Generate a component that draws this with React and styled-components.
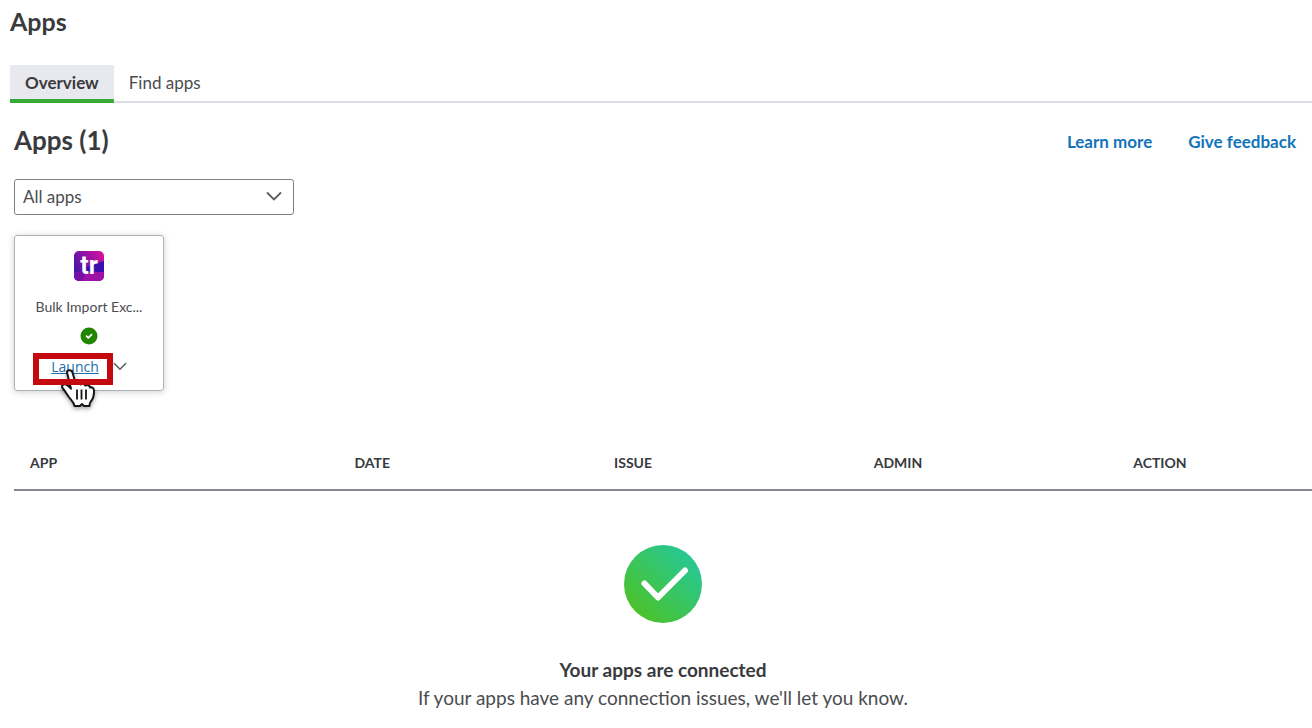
import React, { useState } from "react";
import styled, { createGlobalStyle, css } from "styled-components";

const GlobalStyle = createGlobalStyle`
  *, *::before, *::after {
    box-sizing: border-box;
  }

  body {
    margin: 0;
    background: #fff;
    color: #393a3d;
    font-family: Lato, "Open Sans", sans-serif;
    font-size: 17px;
    line-height: 20px;
  }
`;

const Page = styled.main`
  padding: 5px 0 0 10px;
`;

const PageTitle = styled.h1`
  margin: 0;
  font-size: 25px;
  font-weight: 700;
  line-height: 32px;
`;

const TabBar = styled.div`
  display: flex;
  align-items: flex-end;
  margin-top: 28px;
  height: 38px;
  box-shadow: inset 0 -2px 0 #dcdce4;
`;

const Tab = styled.button`
  height: 38px;
  padding: 0 15px 3px;
  border: 0;
  background: transparent;
  color: #4b4c50;
  font: inherit;
  cursor: pointer;

  ${props =>
    props.$active &&
    css`
      background: linear-gradient(#39a935, #39a935) bottom / 100% 4px no-repeat,
        #e8e9ee;
      color: #393a3d;
      font-weight: 700;
    `}
`;

const Content = styled.section`
  padding-left: 4px;
`;

const SectionHeader = styled.header`
  display: flex;
  align-items: center;
  justify-content: space-between;
  margin-top: 21px;
  padding-right: 16px;
`;

const SectionTitle = styled.h2`
  margin: 0;
  font-size: 26px;
  font-weight: 700;
  line-height: 32px;
`;

const HeaderLinks = styled.nav`
  display: flex;
  gap: 36px;
  padding-top: 4px;
`;

const HeaderLink = styled.a`
  color: #1274b8;
  font-weight: 700;
  text-decoration: none;
`;

const SelectField = styled.div`
  display: grid;
  align-items: center;
  width: 280px;
  margin-top: 23px;

  > * {
    grid-area: 1 / 1;
  }

  > svg {
    justify-self: end;
    margin-right: 12px;
    pointer-events: none;
  }
`;

const Select = styled.select`
  appearance: none;
  width: 100%;
  height: 36px;
  padding: 0 40px 0 8px;
  border: 1px solid #7d7f86;
  border-radius: 3px;
  background: #fff;
  color: #4b4c50;
  font: inherit;
`;

const AppCard = styled.article`
  display: flex;
  flex-direction: column;
  align-items: center;
  width: 150px;
  height: 156px;
  margin-top: 20px;
  padding-top: 15px;
  border: 1px solid #b0b1ba;
  border-radius: 3px;
  box-shadow: 0 1px 6px rgba(0, 0, 0, 0.2);
`;

const AppName = styled.div`
  margin: 16px 0 10px;
  color: #4b4c50;
  font-size: 14px;
  white-space: nowrap;
`;

const AppActions = styled.div`
  display: flex;
  align-items: center;
  gap: 14px;
  margin-top: 12px;
`;

const LaunchArea = styled.div`
  position: relative;
`;

const LaunchLink = styled.a`
  display: block;
  color: #1a6ea8;
  font-family: "Open Sans", sans-serif;
  font-size: 14px;
`;

const Highlight = styled.div`
  position: absolute;
  inset: -4px -14px -8px -18px;
  border: 6px solid #c40a0e;
  pointer-events: none;
`;

const Pointer = styled.div`
  position: absolute;
  top: 12px;
  left: 10px;
  pointer-events: none;
  filter: drop-shadow(0 2px 2px rgba(0, 0, 0, 0.35));

  > svg {
    display: block;
  }
`;

const MenuButton = styled.button`
  display: flex;
  padding: 0;
  border: 0;
  background: none;
`;

const IssuesTable = styled.table`
  width: 100%;
  margin-top: 45px;
  border-collapse: collapse;
  border-bottom: 2px solid #85878e;
  table-layout: fixed;
`;

const HeaderCell = styled.th`
  width: ${props => props.$width};
  height: 54px;
  padding: 0 16px;
  font-size: 14px;
  font-weight: 700;
  text-align: left;
`;

const EmptyState = styled.div`
  display: flex;
  flex-direction: column;
  align-items: center;
  margin-top: 53px;
  text-align: center;
`;

const EmptyTitle = styled.h3`
  margin: 32px 0 0;
  font-size: 19px;
  font-weight: 700;
  line-height: 28px;
`;

const EmptyText = styled.p`
  margin: 0;
  color: #4b4c50;
  font-size: 19px;
  line-height: 28px;
`;

const Chevron = ({ size = 16 }) => (
  <svg width={size} height={size} viewBox="0 0 16 16" fill="none" aria-hidden="true">
    <path d="M1.500 4 8 10.500 14.500 4" stroke="#5d5e63" strokeWidth="1.800" strokeLinecap="round" />
  </svg>
);

const AppLogo = () => (
  <svg width="30" height="30" viewBox="0 0 30 30" aria-hidden="true">
    <defs>
      <linearGradient id="logoTop" x1="0" y1="0.600" x2="1" y2="0">
        <stop offset="0" stopColor="#4a14a4" />
        <stop offset="0.500" stopColor="#9413a4" />
        <stop offset="1" stopColor="#e0109c" />
      </linearGradient>
      <clipPath id="logoShape">
        <rect width="30" height="30" rx="5" />
      </clipPath>
    </defs>
    <g clipPath="url(#logoShape)">
      <rect width="30" height="30" fill="url(#logoTop)" />
      <path d="M30 10 12 16v6h18z" fill="#3a0fae" />
      <path d="M0 21h30v9H0z" fill="#9c12a6" />
      <path d="M0 21h12l-4 9H0z" fill="#7412a8" />
    </g>
    <text x="15" y="23" textAnchor="middle" fill="#fff" fontFamily="Roboto, sans-serif" fontSize="25" fontWeight="700">
      tr
    </text>
  </svg>
);

const StatusIcon = () => (
  <svg width="18" height="18" viewBox="0 0 18 18" role="img" aria-label="Connected">
    <circle cx="9" cy="9" r="8.500" fill="#228500" />
    <path d="m6.500 9.200 1.800 1.700 3.200-3.200" fill="none" stroke="#fff" strokeWidth="1.800" strokeLinecap="round" strokeLinejoin="round" />
  </svg>
);

const HandIcon = () => (
  <svg width="38" height="40" viewBox="0 0 38 40" aria-hidden="true">
    <path
      d="M6 3.500C6 .500 10.500.300 11.500 3.500l3.200 11c1.500-1.500 4-1 4.800 1 1.500-1.300 4-.800 4.800 1 2-1 4.200-.300 4.700 2 2-.500 3.800.500 4 3 .200 5-.800 8.500-3.500 11.500-.800 1-1 2-1 4h-5.500l-2-2-2 2h-5.500c-.500-4-3.500-6-6-9.500-2-3-3.500-5.500-6-8.500-1.500-2.500 1-4.500 3.500-3.500 2 .800 3.500 2.500 5 4.200z"
      fill="#fff"
      stroke="#161616"
      strokeWidth="2"
      strokeLinejoin="round"
    />
    <path d="M16 20.500v10M20.500 20.500v10M25 20.500v10" stroke="#161616" strokeWidth="1.800" />
  </svg>
);

const ConnectedIcon = () => (
  <svg width="80" height="80" viewBox="0 0 80 80" aria-hidden="true">
    <defs>
      <linearGradient id="connected" x1="0.150" y1="0.850" x2="0.850" y2="0.150">
        <stop offset="0" stopColor="#4bc22c" />
        <stop offset="1" stopColor="#27c893" />
      </linearGradient>
    </defs>
    <circle cx="40" cy="40" r="39" fill="url(#connected)" />
    <path d="M21.500 39.500 35 53.500 62 26.500" fill="none" stroke="#fff" strokeWidth="6" strokeLinecap="round" strokeLinejoin="round" />
  </svg>
);

const columns = [
  { label: "APP", width: "25%" },
  { label: "DATE", width: "20%" },
  { label: "ISSUE", width: "20%" },
  { label: "ADMIN", width: "20%" },
  { label: "ACTION", width: "15%" }
];

const tabs = ["Overview", "Find apps"];

const App = () => {
  const [activeTab, setActiveTab] = useState("Overview");

  return (
    <>
      <GlobalStyle />
      <Page>
        <PageTitle>Apps</PageTitle>
        <TabBar role="tablist">
          {tabs.map(tab => (
            <Tab
              key={tab}
              role="tab"
              aria-selected={tab === activeTab}
              $active={tab === activeTab}
              onClick={() => setActiveTab(tab)}
            >
              {tab}
            </Tab>
          ))}
        </TabBar>

        <Content>
          <SectionHeader>
            <SectionTitle>Apps (1)</SectionTitle>
            <HeaderLinks>
              <HeaderLink href="#learn">Learn more</HeaderLink>
              <HeaderLink href="#feedback">Give feedback</HeaderLink>
            </HeaderLinks>
          </SectionHeader>

          <SelectField>
            <Select aria-label="Filter apps">
              <option>All apps</option>
            </Select>
            <Chevron />
          </SelectField>

          <AppCard>
            <AppLogo />
            <AppName>Bulk Import Exc...</AppName>
            <StatusIcon />
            <AppActions>
              <LaunchArea>
                <LaunchLink href="#launch">Launch</LaunchLink>
                <Pointer>
                  <HandIcon />
                </Pointer>
                <Highlight />
              </LaunchArea>
              <MenuButton aria-label="More actions">
                <Chevron size={14} />
              </MenuButton>
            </AppActions>
          </AppCard>

          <IssuesTable>
            <thead>
              <tr>
                {columns.map(({ label, width }) => (
                  <HeaderCell key={label} scope="col" $width={width}>
                    {label}
                  </HeaderCell>
                ))}
              </tr>
            </thead>
          </IssuesTable>

          <EmptyState>
            <ConnectedIcon />
            <EmptyTitle>Your apps are connected</EmptyTitle>
            <EmptyText>
              If your apps have any connection issues, we'll let you know.
            </EmptyText>
          </EmptyState>
        </Content>
      </Page>
    </>
  );
};

export default App;
